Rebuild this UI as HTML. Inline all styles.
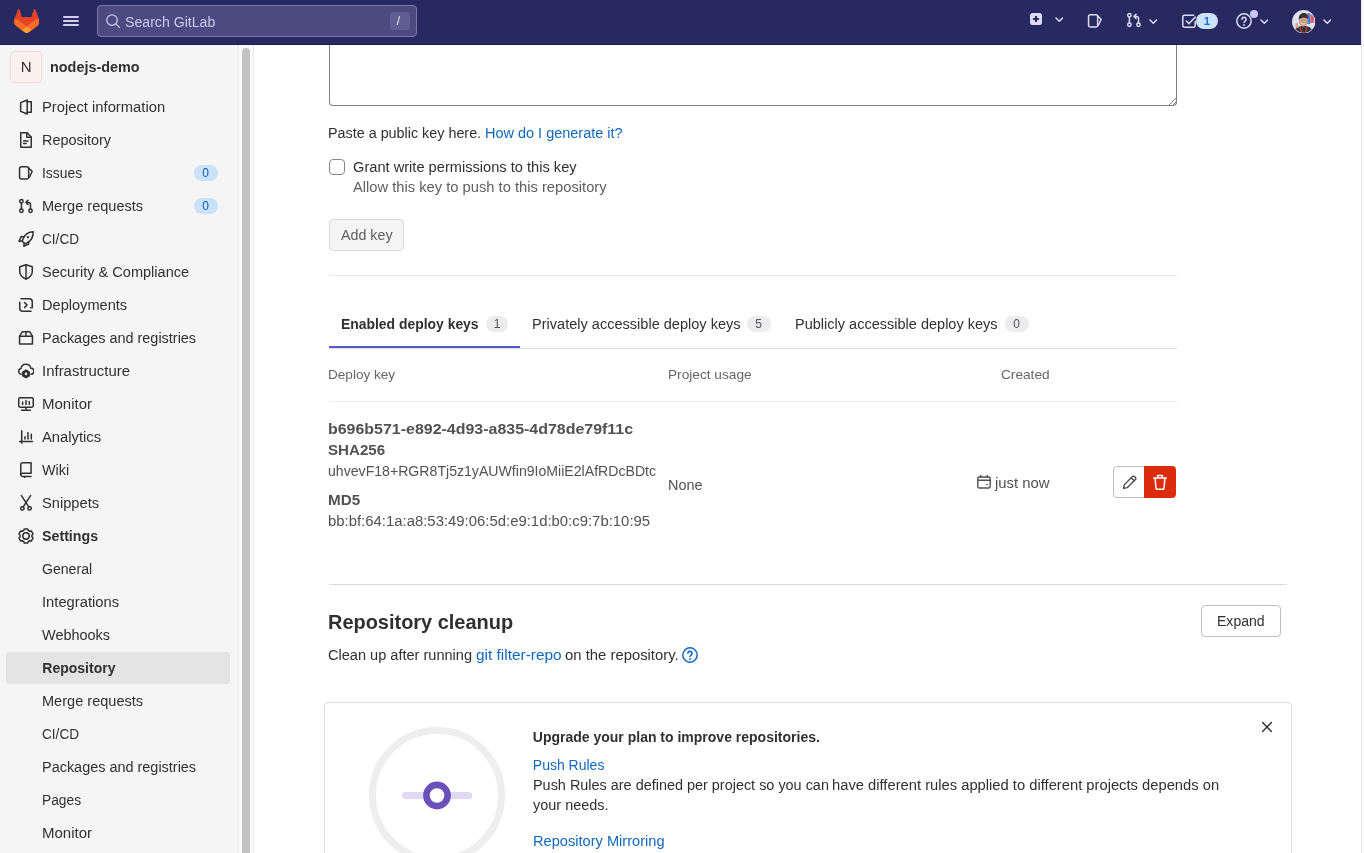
<!DOCTYPE html>
<html lang="en"><head><meta charset="utf-8"><title>Repository · Settings · nodejs-demo · GitLab</title>
<style>
*{box-sizing:border-box}
html,body{margin:0;padding:0}
body{width:1364px;height:853px;overflow:hidden;position:relative;background:#fff;font-family:"Liberation Sans", sans-serif;font-size:14px;color:#303030;-webkit-font-smoothing:antialiased}
#app{position:absolute;left:0;top:0;width:1364px;height:853px;overflow:hidden;will-change:transform}
.abs{position:absolute}
.t{position:absolute;white-space:pre;margin:0;padding:0;display:block;transform-origin:0 50%}
a{color:#1068bf;text-decoration:none}
#nav{position:absolute;left:0;top:0;width:1361px;height:45px;background:#292961;border-bottom:1px solid #1d1c5b}
#sb{position:absolute;left:0;top:45px;width:239px;height:808px;background:#f5f5f5;overflow:hidden}
#sbtrack{position:absolute;left:238px;top:45px;width:16px;height:808px;background:#fafafa;border-left:1px solid #e8e8e8;border-right:1px solid #e8e8e8}
#sbthumb{position:absolute;left:242px;top:48px;width:8px;height:820px;background:#c1c1c1;border-radius:4px}
#pgtrack{position:absolute;left:1361px;top:0;width:3px;height:853px;background:#fafafa;border-left:1px solid #e8e8e8}
.pill{position:absolute;border-radius:10px;background:#cbe2f9}
.pillm{position:absolute;border-radius:10px;background:#ececef}
.hr{position:absolute;height:1px;background:#dcdcde}
</style></head><body><div id="app">

<header id="nav">
<svg class="abs" style="left:13.500px;top:8.600px" width="25.400" height="24.600" viewBox="94 96.500 192 186.500" preserveAspectRatio="none">
<path d="m282.830 170.730-.27-.69-26.140-68.220a6.810 6.810 0 0 0-2.690-3.240 7 7 0 0 0-8 .43 7 7 0 0 0-2.320 3.520l-17.650 54H154.290l-17.650-54A6.860 6.860 0 0 0 134.320 99a7 7 0 0 0-8-.43 6.870 6.870 0 0 0-2.690 3.240L97.440 170l-.26.690a48.540 48.540 0 0 0 16.100 56.100l.09.07.24.17 39.820 29.820 19.700 14.910 12 9.060a8.070 8.070 0 0 0 9.760 0l12-9.060 19.700-14.910 40.060-30 .1-.08a48.560 48.560 0 0 0 16.080-56.040z" fill="#e24329"/>
<path d="m282.830 170.730-.27-.69a88.300 88.300 0 0 0-35.150 15.800L190 229.250c19.550 14.790 36.570 27.640 36.570 27.640l40.060-30 .1-.08a48.560 48.560 0 0 0 16.100-56.080z" fill="#fc6d26"/>
<path d="m153.430 256.890 19.700 14.910 12 9.060a8.070 8.070 0 0 0 9.760 0l12-9.060 19.700-14.910S209.550 244 190 229.250c-19.550 14.750-36.570 27.640-36.570 27.640z" fill="#fca326"/>
<path d="M132.580 185.840A88.190 88.190 0 0 0 97.440 170l-.26.690a48.540 48.540 0 0 0 16.100 56.100l.09.07.24.17 39.820 29.820s17-12.850 36.570-27.640z" fill="#fc6d26"/>
</svg>
<div class="abs" style="left:63px;top:16.0px;width:16px;height:1.600px;background:#d2cfee;border-radius:1px"></div>
<div class="abs" style="left:63px;top:20.15px;width:16px;height:1.600px;background:#d2cfee;border-radius:1px"></div>
<div class="abs" style="left:63px;top:24.4px;width:16px;height:1.600px;background:#d2cfee;border-radius:1px"></div>
<div class="abs" style="left:97px;top:5px;width:320px;height:32px;background:#4c4b81;border:1px solid #7776a6;border-radius:4px"></div>
<svg style="position:absolute;left:105px;top:13px;color:#cbc9ea" width="16" height="16" viewBox="0 0 16 16" fill="none" stroke="#cbc9ea" stroke-width="1.3" stroke-linecap="round" stroke-linejoin="round" ><circle cx="7" cy="7.100" r="5.250"/><path d="M10.800 10.900 14.500 14.400"/></svg>
<span class="t" style="left:125.3px;top:11.8px;font-size:14px;line-height:20px;color:#cbc9ea;transform:scaleX(1.0089);">Search GitLab</span>
<div class="abs" style="left:390px;top:12px;width:20px;height:18px;background:#5f5e93;border-radius:3px"></div>
<span class="t" style="left:396.8px;top:11px;font-size:12px;line-height:20px;color:#e6e5f3;">/</span>
<div class="abs" style="left:1030px;top:13px;width:12px;height:12px;background:#dcd9f2;border-radius:2.500px"></div>
<div class="abs" style="left:1033.200px;top:18.200px;width:5.600px;height:1.600px;background:#292961"></div>
<div class="abs" style="left:1035.200px;top:16.200px;width:1.600px;height:5.600px;background:#292961"></div>
<svg style="position:absolute;left:1054.7px;top:17.1px;color:#dddbf0" width="8.6" height="5.6" viewBox="0 0 8.600 5.600" fill="none" stroke="#dddbf0" stroke-width="1.5" stroke-linecap="round" stroke-linejoin="round" ><path d="M1 1 4.300 4.300 7.600 1"/></svg>
<svg style="position:absolute;left:1087px;top:13px;color:#dddbf0" width="16" height="16" viewBox="0 0 16 16" fill="none" stroke="#dddbf0" stroke-width="1.5" stroke-linecap="round" stroke-linejoin="round" ><path d="M3.300 1.750h5.600a1.750 1.750 0 0 1 1.750 1.750v8.800a1.750 1.750 0 0 1-1.750 1.750H3.300a1.750 1.750 0 0 1-1.750-1.750V3.500A1.750 1.750 0 0 1 3.300 1.750z"/><path d="M10.650 3.100 14.200 6.300 11.400 12.200"/></svg>
<svg style="position:absolute;left:1126px;top:12.4px;color:#dddbf0" width="16" height="16" viewBox="0 0 16 16" fill="none" stroke="#dddbf0" stroke-width="1.5" stroke-linecap="round" stroke-linejoin="round" ><circle cx="3.400" cy="3.250" r="1.700"/><circle cx="3.400" cy="12.750" r="1.700"/><path d="M3.400 5v6"/><circle cx="12.500" cy="12.750" r="1.700"/><path d="M12.500 11V6.400a2 2 0 0 0-2-2H8.300"/><path d="M10 2.400 8 4.400l2 2"/></svg>
<svg style="position:absolute;left:1148.7px;top:18.8px;color:#dddbf0" width="8.6" height="5.6" viewBox="0 0 8.600 5.600" fill="none" stroke="#dddbf0" stroke-width="1.5" stroke-linecap="round" stroke-linejoin="round" ><path d="M1 1 4.300 4.300 7.600 1"/></svg>
<svg style="position:absolute;left:1181px;top:13px;color:#dddbf0" width="16" height="16" viewBox="0 0 16 16" fill="none" stroke="#dddbf0" stroke-width="1.5" stroke-linecap="round" stroke-linejoin="round" ><path d="M14.200 8.400v4.200a1.600 1.600 0 0 1-1.600 1.600H3.400a1.600 1.600 0 0 1-1.600-1.600V3.800a1.600 1.600 0 0 1 1.600-1.600h9.200"/><path d="M5.400 8 8 10.600l6.400-6.600"/></svg>
<div class="pill" style="left:1196px;top:13px;width:22px;height:16px"></div>
<span class="t" style="left:1203.8px;top:11px;font-size:11.5px;line-height:20px;color:#1f75cb;font-weight:700;">1</span>
<svg style="position:absolute;left:1236px;top:13px;color:#dddbf0" width="16" height="16" viewBox="0 0 16 16" fill="none" stroke="#dddbf0" stroke-width="1.5" stroke-linecap="round" stroke-linejoin="round" ><circle cx="8" cy="8" r="7.200"/><path d="M5.900 6.300a2.100 2.100 0 1 1 3.200 1.800c-.700.400-1.100.800-1.100 1.500"/><path d="M8 11.900v.1" stroke-width="1.900"/></svg>
<div class="abs" style="left:1250px;top:10px;width:8px;height:8px;background:#c9c5ee;border-radius:4px"></div>
<svg style="position:absolute;left:1259.7px;top:19.0px;color:#dddbf0" width="8.6" height="5.6" viewBox="0 0 8.600 5.600" fill="none" stroke="#dddbf0" stroke-width="1.5" stroke-linecap="round" stroke-linejoin="round" ><path d="M1 1 4.300 4.300 7.600 1"/></svg>
<svg class="abs" style="left:1291.800px;top:9.900px" width="23.400" height="23.400" viewBox="0 0 24 24">
<defs><clipPath id="av"><circle cx="12" cy="12" r="11.300"/></clipPath></defs>
<circle cx="12" cy="12" r="12" fill="#d9d9e6"/>
<g clip-path="url(#av)">
<rect width="24" height="24" fill="#dfe3ec"/>
<rect x="15.600" y="3.400" width="3.200" height="11" fill="#4f7fd0"/>
<rect x="18.800" y="4.800" width="3.800" height="8.400" fill="#d9607a"/>
<path d="M2 24c0-5 3.500-7.500 10-7.500S21 19 21 24z" fill="#34333a"/>
<path d="M8.200 17.500 10.400 24M15.400 17.500 13.400 24" stroke="#c83a32" stroke-width="1.400"/>
<ellipse cx="11.700" cy="11.200" rx="4.600" ry="5.900" fill="#caa08c"/>
<path d="M7 9.800c-.3-4.300 1.900-6.600 4.900-6.600s5 2 4.500 6.400C14.600 7 10 6.800 7 9.800z" fill="#3b2f2b"/>
<path d="M9.400 13.400c1.400 1.300 3.300 1.300 4.600 0" stroke="#f3e9e4" stroke-width=".9" fill="none"/>
<path d="M3.400 15.200c.4-1.800 1.600-2.600 2.400-2l1 4.800-2.800 1z" fill="#d4a692"/>
</g></svg>
<svg style="position:absolute;left:1322.7px;top:19.0px;color:#dddbf0" width="8.6" height="5.6" viewBox="0 0 8.600 5.600" fill="none" stroke="#dddbf0" stroke-width="1.5" stroke-linecap="round" stroke-linejoin="round" ><path d="M1 1 4.300 4.300 7.600 1"/></svg>
</header>
<aside id="sb"></aside><div id="sbtrack"></div><div id="sbthumb"></div><div id="pgtrack"></div>
<nav>
<div class="abs" style="left:10px;top:51px;width:32px;height:32px;background:#fdf1ef;border:1px solid #ecdcd9;border-radius:4px"></div>
<span class="t" style="left:20.7px;top:57px;font-size:15px;line-height:20px;color:#303030;">N</span>
<span class="t" style="left:49.8px;top:57px;font-size:14px;line-height:20px;color:#303030;transform:scaleX(1.0284);font-weight:700;">nodejs-demo</span>
<svg style="position:absolute;left:18px;top:99px;color:#303030" width="16" height="16" viewBox="0 0 16 16" fill="none" stroke="#303030" stroke-width="1.5" stroke-linecap="round" stroke-linejoin="round" ><path d="M9.200 1 2.650 3.600v8.800L9.200 15z"/><path d="M9.200 2.750h4.050v10.500H9.200"/></svg>
<span class="t" style="left:42.3px;top:97px;font-size:14px;line-height:20px;color:#303030;transform:scaleX(1.0547);">Project information</span>
<svg style="position:absolute;left:18px;top:132px;color:#303030" width="16" height="16" viewBox="0 0 16 16" fill="none" stroke="#303030" stroke-width="1.5" stroke-linecap="round" stroke-linejoin="round" ><path d="M2.750.750h6.300l4.200 4.200v10.300H2.750z"/><path d="M8.800 1v4.200h4.200"/><path d="M5.600 9h4.400M5.600 11.600h2.600"/></svg>
<span class="t" style="left:42.3px;top:130px;font-size:14px;line-height:20px;color:#303030;transform:scaleX(1.0325);">Repository</span>
<svg style="position:absolute;left:18px;top:165px;color:#303030" width="16" height="16" viewBox="0 0 16 16" fill="none" stroke="#303030" stroke-width="1.5" stroke-linecap="round" stroke-linejoin="round" ><path d="M3.300 1.750h5.600a1.750 1.750 0 0 1 1.750 1.750v8.800a1.750 1.750 0 0 1-1.750 1.750H3.300a1.750 1.750 0 0 1-1.750-1.750V3.500A1.750 1.750 0 0 1 3.300 1.750z"/><path d="M10.650 3.100 14.200 6.300 11.400 12.200"/></svg>
<span class="t" style="left:42.3px;top:163px;font-size:14px;line-height:20px;color:#303030;transform:scaleX(0.9909);">Issues</span>
<div class="pill" style="left:194px;top:165px;width:24px;height:16px"></div>
<span class="t" style="left:202.3px;top:163px;font-size:12px;line-height:20px;color:#0b5cad;">0</span>
<svg style="position:absolute;left:18px;top:198px;color:#303030" width="16" height="16" viewBox="0 0 16 16" fill="none" stroke="#303030" stroke-width="1.5" stroke-linecap="round" stroke-linejoin="round" ><circle cx="3.400" cy="3.250" r="1.700"/><circle cx="3.400" cy="12.750" r="1.700"/><path d="M3.400 5v6"/><circle cx="12.500" cy="12.750" r="1.700"/><path d="M12.500 11V6.400a2 2 0 0 0-2-2H8.300"/><path d="M10 2.400 8 4.400l2 2"/></svg>
<span class="t" style="left:42.3px;top:196px;font-size:14px;line-height:20px;color:#303030;transform:scaleX(1.0393);">Merge requests</span>
<div class="pill" style="left:194px;top:198px;width:24px;height:16px"></div>
<span class="t" style="left:202.3px;top:196px;font-size:12px;line-height:20px;color:#0b5cad;">0</span>
<svg style="position:absolute;left:18px;top:231px;color:#303030" width="16" height="16" viewBox="0 0 16 16" fill="none" stroke="#303030" stroke-width="1.5" stroke-linecap="round" stroke-linejoin="round" ><path d="M15.200.800c-4.600 0-8.400 2.600-10.200 7.200l-.800 2.200 2.500 2.500 2.200-.800c4.600-1.800 6.300-6.500 6.300-11.100z"/><path d="M5.600 5.800 3.200 5.600 1 10.400l3-.400"/><path d="M10.400 10.600l.200 2.400-4.800 2.200.4-3"/><circle cx="9.900" cy="6.200" r="1.100" fill="currentColor" stroke="none"/></svg>
<span class="t" style="left:42.3px;top:229px;font-size:14px;line-height:20px;color:#303030;transform:scaleX(0.9731);">CI/CD</span>
<svg style="position:absolute;left:18px;top:264px;color:#303030" width="16" height="16" viewBox="0 0 16 16" fill="none" stroke="#303030" stroke-width="1.5" stroke-linecap="round" stroke-linejoin="round" ><path d="M8 .800 1.750 2.800v4.600c0 3.400 2.400 6 6.250 7.700 3.850-1.700 6.250-4.300 6.250-7.700V2.800z"/><path d="M8 1v14"/></svg>
<span class="t" style="left:42.3px;top:262px;font-size:14px;line-height:20px;color:#303030;transform:scaleX(1.0387);">Security &amp; Compliance</span>
<svg style="position:absolute;left:18px;top:297px;color:#303030" width="16" height="16" viewBox="0 0 16 16" fill="none" stroke="#303030" stroke-width="1.5" stroke-linecap="round" stroke-linejoin="round" ><path d="M3 1.750h8.250a3 3 0 0 1 3 3v6h-1.500"/><path d="M13 14.250H4.750a3 3 0 0 1-3-3V5.200"/><path d="M6.700 5.600 9.100 8 6.700 10.400"/></svg>
<span class="t" style="left:42.3px;top:295px;font-size:14px;line-height:20px;color:#303030;transform:scaleX(1.0416);">Deployments</span>
<svg style="position:absolute;left:18px;top:330px;color:#303030" width="16" height="16" viewBox="0 0 16 16" fill="none" stroke="#303030" stroke-width="1.5" stroke-linecap="round" stroke-linejoin="round" ><path d="M1.550 6.200h12.900v7.850H1.550z"/><path d="M1.550 6.200 4.400 1.650h7.200l2.850 4.550"/><path d="M8 1.650v4.550"/></svg>
<span class="t" style="left:42.3px;top:328px;font-size:14px;line-height:20px;color:#303030;transform:scaleX(1.0313);">Packages and registries</span>
<svg style="position:absolute;left:18px;top:363px;color:#303030" width="16" height="16" viewBox="0 0 16 16" fill="none" stroke="#303030" stroke-width="1.5" stroke-linecap="round" stroke-linejoin="round" ><path d="M3.200 11.200a2.900 2.900 0 0 1-.200-5.700 5 5 0 0 1 9.800-.300 3 3 0 0 1 .2 6"/><path d="M8.00 7.20 L11.20 9.05 L11.20 12.75 L8.00 14.60 L4.80 12.75 L4.80 9.05Z" fill="currentColor" stroke-width="1.500"/><circle cx="8" cy="10.900" r="1.350" fill="#f5f5f5" stroke="none"/></svg>
<span class="t" style="left:42.3px;top:361px;font-size:14px;line-height:20px;color:#303030;transform:scaleX(1.0681);">Infrastructure</span>
<svg style="position:absolute;left:18px;top:396px;color:#303030" width="16" height="16" viewBox="0 0 16 16" fill="none" stroke="#303030" stroke-width="1.5" stroke-linecap="round" stroke-linejoin="round" ><rect x=".750" y="1.650" width="14.500" height="9.500" rx="1.400"/><path d="M3.600 14.300h8.800M8 11.400v2.700"/><path d="M4.600 6v2.400M8 4.600v3.800M11.300 5.600v2.800"/></svg>
<span class="t" style="left:42.3px;top:394px;font-size:14px;line-height:20px;color:#303030;transform:scaleX(1.0731);">Monitor</span>
<svg style="position:absolute;left:18px;top:429px;color:#303030" width="16" height="16" viewBox="0 0 16 16" fill="none" stroke="#303030" stroke-width="1.5" stroke-linecap="round" stroke-linejoin="round" ><path d="M3.700 1.750v12.500M1.650 12.400h12.700"/><path d="M7 10V7.800M10 10V3.800M13.300 10V5.300"/></svg>
<span class="t" style="left:42.3px;top:427px;font-size:14px;line-height:20px;color:#303030;transform:scaleX(1.0548);">Analytics</span>
<svg style="position:absolute;left:18px;top:462px;color:#303030" width="16" height="16" viewBox="0 0 16 16" fill="none" stroke="#303030" stroke-width="1.5" stroke-linecap="round" stroke-linejoin="round" ><path d="M13.050 11V.750H4.750a2 2 0 0 0-2 2v9.800"/><path d="M13.050 11.200H4.500a1.650 1.650 0 0 0 0 3.300h8.550"/><path d="M6.600 14.500v1"/></svg>
<span class="t" style="left:42.3px;top:460px;font-size:14px;line-height:20px;color:#303030;transform:scaleX(1.0251);">Wiki</span>
<svg style="position:absolute;left:18px;top:495px;color:#303030" width="16" height="16" viewBox="0 0 16 16" fill="none" stroke="#303030" stroke-width="1.5" stroke-linecap="round" stroke-linejoin="round" ><circle cx="4.400" cy="13.400" r="1.700"/><circle cx="11.600" cy="13.400" r="1.700"/><path d="M3.400.600 10.800 11.900M12.600.600 5.200 11.900"/></svg>
<span class="t" style="left:42.3px;top:493px;font-size:14px;line-height:20px;color:#303030;transform:scaleX(1.0480);">Snippets</span>
<svg style="position:absolute;left:18px;top:528px;color:#303030" width="16" height="16" viewBox="0 0 16 16" fill="none" stroke="#303030" stroke-width="1.5" stroke-linecap="round" stroke-linejoin="round" ><path d="M6.23 0.92 L9.77 0.92 L10.25 2.44 L11.69 3.27 L13.25 2.93 L15.02 5.99 L13.94 7.16 L13.94 8.84 L15.02 10.01 L13.25 13.07 L11.69 12.73 L10.25 13.56 L9.77 15.08 L6.23 15.08 L5.75 13.56 L4.31 12.73 L2.75 13.07 L0.98 10.01 L2.06 8.84 L2.06 7.16 L0.98 5.99 L2.75 2.93 L4.31 3.27 L5.75 2.44Z"/><circle cx="8" cy="8" r="3.200"/></svg>
<span class="t" style="left:42.3px;top:526px;font-size:14px;line-height:20px;color:#303030;transform:scaleX(1.0157);font-weight:700;">Settings</span>
<span class="t" style="left:42.3px;top:559px;font-size:14px;line-height:20px;color:#303030;transform:scaleX(1.0058);">General</span>
<span class="t" style="left:42.3px;top:592px;font-size:14px;line-height:20px;color:#303030;transform:scaleX(1.0537);">Integrations</span>
<span class="t" style="left:42.3px;top:625px;font-size:14px;line-height:20px;color:#303030;transform:scaleX(1.0333);">Webhooks</span>
<div class="abs" style="left:6px;top:652px;width:224px;height:32px;background:#e4e4e4;border-radius:4px"></div>
<span class="t" style="left:42.3px;top:658px;font-size:14px;line-height:20px;color:#303030;font-weight:700;">Repository</span>
<span class="t" style="left:42.3px;top:691px;font-size:14px;line-height:20px;color:#303030;transform:scaleX(1.0393);">Merge requests</span>
<span class="t" style="left:42.3px;top:724px;font-size:14px;line-height:20px;color:#303030;transform:scaleX(0.9731);">CI/CD</span>
<span class="t" style="left:42.3px;top:757px;font-size:14px;line-height:20px;color:#303030;transform:scaleX(1.0313);">Packages and registries</span>
<span class="t" style="left:42.3px;top:790px;font-size:14px;line-height:20px;color:#303030;transform:scaleX(0.9848);">Pages</span>
<span class="t" style="left:42.3px;top:823px;font-size:14px;line-height:20px;color:#303030;transform:scaleX(1.0731);">Monitor</span>
</nav>
<main>
<div class="abs" style="left:329px;top:45px;width:848px;height:61px;border:1px solid #808080;border-top:0;border-radius:0 0 4px 4px;background:#fff"></div>
<svg class="abs" style="left:1167px;top:96px" width="10" height="10" viewBox="0 0 10 10" fill="none" stroke="#777" stroke-width="1"><path d="M9.300 1.800 1.800 9.300M9.300 5.800 5.800 9.300"/></svg>
<span class="t" style="left:328.3px;top:123px;font-size:14px;line-height:20px;color:#303030;transform:scaleX(1.0247);">Paste a public key here. </span>
<span class="t" style="left:484.8px;top:123px;font-size:14px;line-height:20px;color:#1068bf;transform:scaleX(1.0339);"><a>How do I generate it?</a></span>
<div class="abs" style="left:329px;top:159px;width:16px;height:16px;border:1px solid #868686;border-radius:4px;background:#fff"></div>
<span class="t" style="left:352.8px;top:157px;font-size:14px;line-height:20px;color:#303030;transform:scaleX(1.0450);">Grant write permissions to this key</span>
<span class="t" style="left:352.8px;top:177px;font-size:14px;line-height:20px;color:#5e5e5e;transform:scaleX(1.0513);">Allow this key to push to this repository</span>
<div class="abs" style="left:329px;top:219px;width:75px;height:32px;background:#f5f5f5;border:1px solid #dbdbdb;border-radius:4px"></div>
<span class="t" style="left:340.8px;top:225px;font-size:14px;line-height:20px;color:#5e5e5e;transform:scaleX(1.0199);">Add key</span>
<div class="hr" style="left:329px;top:275px;width:848px;background:#e8e8e8"></div>
<span class="t" style="left:340.8px;top:314px;font-size:14px;line-height:20px;color:#303030;transform:scaleX(0.9935);font-weight:700;">Enabled deploy keys</span>
<div class="pillm" style="left:486px;top:316px;width:22px;height:16px"></div>
<span class="t" style="left:493.8px;top:314px;font-size:12px;line-height:20px;color:#525252;">1</span>
<span class="t" style="left:531.8px;top:314px;font-size:14px;line-height:20px;color:#303030;transform:scaleX(1.0390);">Privately accessible deploy keys</span>
<div class="pillm" style="left:747px;top:316px;width:24px;height:16px"></div>
<span class="t" style="left:755.3px;top:314px;font-size:12px;line-height:20px;color:#525252;">5</span>
<span class="t" style="left:794.8px;top:314px;font-size:14px;line-height:20px;color:#303030;transform:scaleX(1.0372);">Publicly accessible deploy keys</span>
<div class="pillm" style="left:1005px;top:316px;width:24px;height:16px"></div>
<span class="t" style="left:1013.3px;top:314px;font-size:12px;line-height:20px;color:#525252;">0</span>
<div class="hr" style="left:329px;top:348px;width:848px;background:#dcdcde"></div>
<div class="abs" style="left:329px;top:346px;width:191px;height:2px;background:#5759d0"></div>
<span class="t" style="left:328.3px;top:364.7px;font-size:13px;line-height:20px;color:#666;transform:scaleX(1.0433);">Deploy key</span>
<span class="t" style="left:667.8px;top:364.7px;font-size:13px;line-height:20px;color:#666;transform:scaleX(1.0516);">Project usage</span>
<span class="t" style="left:1000.8px;top:364.7px;font-size:13px;line-height:20px;color:#666;transform:scaleX(1.0508);">Created</span>
<div class="hr" style="left:329px;top:401px;width:848px;background:#ececec"></div>
<span class="t" style="left:328.3px;top:419px;font-size:14px;line-height:20px;color:#525252;transform:scaleX(1.1395);font-weight:700;">b696b571-e892-4d93-a835-4d78de79f11c</span>
<span class="t" style="left:328.3px;top:440px;font-size:14px;line-height:20px;color:#525252;transform:scaleX(1.0789);font-weight:700;">SHA256</span>
<span class="t" style="left:328.3px;top:461px;font-size:14px;line-height:20px;color:#525252;transform:scaleX(1.0076);">uhvevF18+RGR8Tj5z1yAUWfin9IoMiiE2lAfRDcBDtc</span>
<span class="t" style="left:328.3px;top:490px;font-size:14px;line-height:20px;color:#525252;transform:scaleX(1.0858);font-weight:700;">MD5</span>
<span class="t" style="left:328.3px;top:511px;font-size:14px;line-height:20px;color:#525252;transform:scaleX(1.0636);">bb:bf:64:1a:a8:53:49:06:5d:e9:1d:b0:c9:7b:10:95</span>
<span class="t" style="left:667.8px;top:475px;font-size:14px;line-height:20px;color:#525252;transform:scaleX(1.0338);">None</span>
<svg style="position:absolute;left:976px;top:474px;color:#525252" width="16" height="16" viewBox="0 0 16 16" fill="none" stroke="#525252" stroke-width="1.4" stroke-linecap="round" stroke-linejoin="round" ><rect x="1.800" y="3" width="12.400" height="11" rx="1.400"/><path d="M1.800 6.200h12.400M4.800 1.400v2M11.200 1.400v2"/><path d="M10.800 10.400h.4"/></svg>
<span class="t" style="left:994.8px;top:473px;font-size:14px;line-height:20px;color:#525252;transform:scaleX(1.0631);">just now</span>
<div class="abs" style="left:1113px;top:466px;width:32px;height:32px;background:#fff;border:1px solid #bfbfc3;border-radius:4px 0 0 4px"></div>
<svg style="position:absolute;left:1120.7px;top:473.6px;color:#4a4a4a" width="17" height="17" viewBox="0 0 16 16" fill="none" stroke="#4a4a4a" stroke-width="1.3" stroke-linecap="round" stroke-linejoin="round" ><path d="M10.800 2.400a1.400 1.400 0 0 1 2 0l.8.800a1.400 1.400 0 0 1 0 2L6 12.800l-3.600.800.800-3.600z"/><path d="M9.600 3.600l2.800 2.800"/></svg>
<div class="abs" style="left:1144px;top:466px;width:32px;height:32px;background:#dd2b0e;border-radius:0 4px 4px 0"></div>
<svg style="position:absolute;left:1152px;top:474px;color:#fff" width="16" height="16" viewBox="0 0 16 16" fill="none" stroke="#fff" stroke-width="1.5" stroke-linecap="round" stroke-linejoin="round" ><path d="M1.750 3.900h12.500"/><path d="M5.600 3.700V1.500h4.800v2.200"/><path d="M3.100 4.200l.9 9.900a1.300 1.300 0 0 0 1.300 1.200h5.400a1.300 1.300 0 0 0 1.300-1.200l.9-9.900"/></svg>
<div class="hr" style="left:329px;top:584px;width:958px;background:#dcdcde"></div>
<span class="t" style="left:328.3px;top:607.8px;font-size:21px;line-height:28px;color:#303030;transform:scaleX(0.9498);font-weight:700;">Repository cleanup</span>
<span class="t" style="left:328.3px;top:645px;font-size:14px;line-height:20px;color:#303030;transform:scaleX(1.0398);">Clean up after running </span>
<span class="t" style="left:475.8px;top:645px;font-size:14px;line-height:20px;color:#1068bf;transform:scaleX(1.1001);"><a>git filter-repo</a></span>
<span class="t" style="left:560.8px;top:645px;font-size:14px;line-height:20px;color:#303030;transform:scaleX(1.0592);"> on the repository.</span>
<svg style="position:absolute;left:682px;top:647px;color:#1068bf" width="16" height="16" viewBox="0 0 16 16" fill="none" stroke="#1068bf" stroke-width="1.5" stroke-linecap="round" stroke-linejoin="round" ><circle cx="8" cy="8" r="7.200"/><path d="M5.900 6.300a2.100 2.100 0 1 1 3.200 1.800c-.700.400-1.100.800-1.100 1.500"/><path d="M8 11.900v.1" stroke-width="1.900"/></svg>
<div class="abs" style="left:1201px;top:605px;width:80px;height:32px;background:#fff;border:1px solid #bfbfc3;border-radius:4px"></div>
<span class="t" style="left:1216.8px;top:611px;font-size:14px;line-height:20px;color:#303030;transform:scaleX(1.0024);">Expand</span>
<div class="abs" style="left:324px;top:702px;width:968px;height:170px;border:1px solid #dcdcde;border-radius:4px;background:#fff"></div>
<svg class="abs" style="left:366px;top:724px" width="142" height="129" viewBox="0 0 142 129">
<ellipse cx="71" cy="76" rx="66" ry="66" fill="#fafafa"/>
<circle cx="71" cy="71.200" r="64.600" fill="#fff" stroke="#eeeeee" stroke-width="7"/>
<rect x="36" y="68" width="70.300" height="7" rx="3.500" fill="#e1d8f3"/>
<circle cx="71" cy="71.500" r="10.600" fill="#fff" stroke="#6b4fbb" stroke-width="6.600"/>
</svg>
<span class="t" style="left:532.8px;top:727px;font-size:14px;line-height:20px;color:#303030;font-weight:700;">Upgrade your plan to improve repositories.</span>
<span class="t" style="left:532.8px;top:755px;font-size:14px;line-height:20px;color:#1068bf;"><a>Push Rules</a></span>
<span class="t" style="left:532.8px;top:775.2px;font-size:14px;line-height:20px;color:#303030;transform:scaleX(1.0304);">Push Rules are defined per project so you can </span>
<span class="t" style="left:832.3px;top:775.2px;font-size:14px;line-height:20px;color:#303030;transform:scaleX(1.0530);">have different rules applied to different projects depends on</span>
<span class="t" style="left:532.8px;top:795px;font-size:14px;line-height:20px;color:#303030;transform:scaleX(1.0332);">your needs.</span>
<span class="t" style="left:532.8px;top:831px;font-size:14px;line-height:20px;color:#1068bf;transform:scaleX(1.0441);"><a>Repository Mirroring</a></span>
<svg style="position:absolute;left:1259px;top:719px;color:#303030" width="16" height="16" viewBox="0 0 16 16" fill="none" stroke="#303030" stroke-width="1.4" stroke-linecap="round" stroke-linejoin="round" ><path d="M3.600 3.600 12.400 12.400M12.400 3.600 3.600 12.400"/></svg>
</main>
</div></body></html>
